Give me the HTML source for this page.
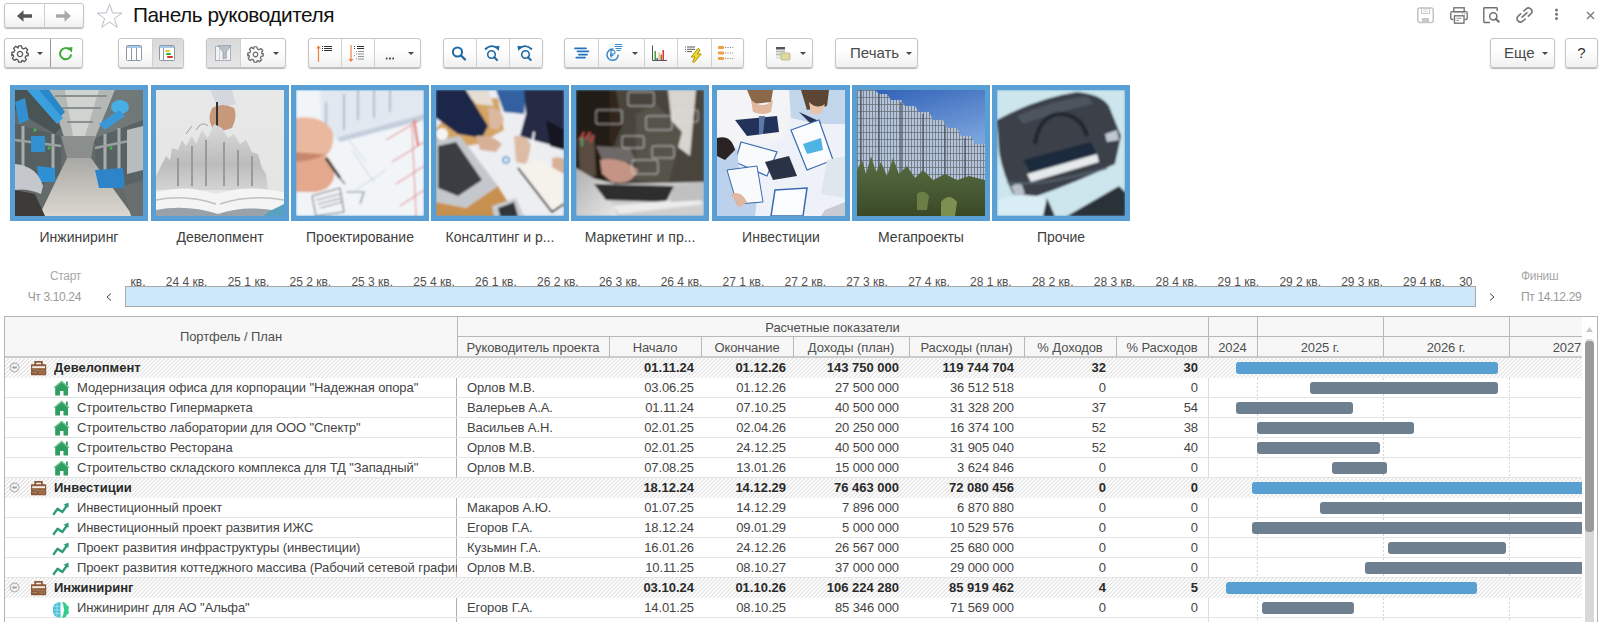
<!DOCTYPE html>
<html><head><meta charset="utf-8">
<style>
*{box-sizing:border-box;margin:0;padding:0}
html,body{width:1604px;height:622px;overflow:hidden;background:#fff;font-family:"Liberation Sans",sans-serif;color:#333;position:relative}
.a{position:absolute}
.btn{position:absolute;top:38px;height:30px;border:1px solid #c6c6c6;border-radius:3px;background:linear-gradient(#fff 40%,#f0f0f0);box-shadow:0 1px 1px #b4b4b4}
.dv{position:absolute;top:0;bottom:0;width:1px;background:#d0d0d0}
.pr{position:absolute;top:0;bottom:0;background:linear-gradient(#d9d9d9,#e6e6e6)}
.dd{position:absolute;width:0;height:0;border-left:3px solid transparent;border-right:3px solid transparent;border-top:3px solid #484848;margin-left:0.5px;margin-top:0.5px}
svg{position:absolute;overflow:visible}
.tile{position:absolute;top:85px;width:138px;height:136px;background:#5a9fd4;padding:5px}
.tile .im{position:relative;width:100%;height:100%;overflow:hidden}
.lbl{position:absolute;top:229px;width:140px;text-align:center;font-size:14px;color:#404040;white-space:nowrap}
.q{position:absolute;top:275px;font-size:12px;color:#505050;white-space:nowrap}
.hd{font-size:13px;color:#4f4f4f;text-align:center;white-space:nowrap;letter-spacing:-0.1px}
.rw{left:0;width:1577px;height:20px;border-bottom:1px solid #e4e4e4;font-size:13px;color:#444;white-space:nowrap;letter-spacing:-0.1px}
.rw.g{font-weight:bold;color:#2a2a2a;letter-spacing:0}
.nm{position:absolute;top:2px;overflow:hidden;width:380px}
.c{position:absolute;top:2px}
.bar{position:absolute;top:4px;height:12px;border-radius:3px}
</style></head><body>
<svg width="0" height="0" style="position:absolute"><defs><pattern id="hatch" width="4" height="4" patternUnits="userSpaceOnUse"><rect width="4" height="4" fill="#fdfdfd"/><path d="M3 0h1v1h-1z M2 1h1v1h-1z M1 2h1v1h-1z M0 3h1v1h-1z" fill="#e0e0e0"/><path d="M0 0h1v1h-1z M3 1h1v1h-1z M2 2h1v1h-1z M1 3h1v1h-1z" fill="#f3f3f3"/></pattern></defs></svg>

<!-- title bar -->
<div class="btn" style="left:4px;top:3px;width:80px;height:25px">
  <div class="dv" style="left:39px"></div>
  <svg style="left:12px;top:6px" width="15" height="12" viewBox="0 0 15 12"><path d="M0 6 L6.5 0.3 V4.2 H15 V7.8 H6.5 V11.7 Z" fill="#555"/></svg>
  <svg style="left:51px;top:6px" width="15" height="12" viewBox="0 0 15 12"><path d="M15 6 L8.5 0.3 V4.2 H0 V7.8 H8.5 V11.7 Z" fill="#a8a8a8"/></svg>
</div>
<svg style="left:96px;top:3px" width="27" height="25" viewBox="0 0 27 25"><path d="M13.5 1 L16.6 10 L26 10 L18.4 15.6 L21.3 24.5 L13.5 19 L5.7 24.5 L8.6 15.6 L1 10 L10.4 10 Z" fill="none" stroke="#b8bec6" stroke-width="1"/></svg>
<div class="a" style="left:133px;top:3px;font-size:20.8px;letter-spacing:-0.45px;color:#111;white-space:nowrap">Панель руководителя</div>

<!-- header icons -->
<svg style="left:1417px;top:7px" width="18" height="17" viewBox="0 0 18 17"><rect x="0.8" y="1" width="15.4" height="14.5" rx="2" fill="none" stroke="#c4c4c4" stroke-width="1.5"/><rect x="4.5" y="1" width="8" height="5.5" fill="none" stroke="#c8c8c8" stroke-width="1"/><path d="M6 2.8 H11 M6 4.6 H11" stroke="#d0d0d0" stroke-width="0.8"/><rect x="5" y="11" width="7" height="4" fill="#c8c8c8"/></svg>
<svg style="left:1450px;top:7px" width="19" height="17" viewBox="0 0 19 17"><rect x="3.8" y="0.8" width="10.4" height="4" fill="none" stroke="#777" stroke-width="1.4"/><path d="M3.5 12.5 H2.2 Q0.8 12.5 0.8 11 V6 Q0.8 4.6 2.2 4.6 H15.8 Q17.2 4.6 17.2 6 V11 Q17.2 12.5 15.8 12.5 H14.5" fill="none" stroke="#777" stroke-width="1.4"/><rect x="4.5" y="8.8" width="9.5" height="7.4" fill="#fff" stroke="#777" stroke-width="1.4"/><path d="M6.5 11.3 H11.5 M6.5 13.5 H9" stroke="#888" stroke-width="0.9"/><circle cx="12.5" cy="6.8" r="0.6" fill="#888"/><circle cx="14.8" cy="6.8" r="0.6" fill="#888"/></svg>
<svg style="left:1483px;top:7px" width="18" height="17" viewBox="0 0 18 17"><path d="M7 15.5 H1.5 Q0.8 15.5 0.8 14.8 V1.5 Q0.8 0.8 1.5 0.8 H13.5 Q14.2 0.8 14.2 1.5 V4" fill="none" stroke="#707070" stroke-width="1.4"/><circle cx="10.3" cy="9.3" r="3.6" fill="none" stroke="#707070" stroke-width="1.5"/><path d="M12.8 11.8 L15.8 14.8" stroke="#707070" stroke-width="2" stroke-linecap="round"/></svg>
<svg style="left:1515px;top:6px" width="19" height="18" viewBox="0 0 17 16"><g transform="rotate(-42 8.5 8)"><path d="M6.6 4.9 H4 Q0.7 4.9 0.7 8 Q0.7 11.1 4 11.1 H6.6" fill="none" stroke="#777" stroke-width="1.45" stroke-linecap="round"/><path d="M10.4 4.9 H13 Q16.3 4.9 16.3 8 Q16.3 11.1 13 11.1 H10.4" fill="none" stroke="#777" stroke-width="1.45" stroke-linecap="round"/><path d="M5.6 8 H11.4" stroke="#777" stroke-width="1.45" stroke-linecap="round"/></g></svg>
<svg style="left:1554px;top:8px" width="5" height="13" viewBox="0 0 5 13"><circle cx="2.5" cy="2" r="1.5" fill="#777"/><circle cx="2.5" cy="6.2" r="1.5" fill="#777"/><circle cx="2.5" cy="10.4" r="1.5" fill="#777"/></svg>
<svg style="left:1586px;top:11px" width="9" height="9" viewBox="0 0 9 9"><path d="M1 1 L8 8 M8 1 L1 8" stroke="#777" stroke-width="1.3"/></svg>

<!-- toolbar -->
<div class="btn" style="left:4px;width:79px">
  <div class="dv" style="left:45px;background:#9a9a9a"></div>
  <svg style="left:6px;top:6px" width="18" height="18" viewBox="-9 -9 18 18"><path d="M-1.5 -8.2 H1.5 L2 -5.9 L3.7 -5 L5.6 -6.3 L7.7 -4.2 L6.4 -2.3 L7 -0.6 L8.2 -0.9 V1.5 L6 2 L5.1 3.7 L6.4 5.6 L4.3 7.7 L2.4 6.4 L1.5 7 V8.2 H-1.5 L-2 6 L-3.7 5.1 L-5.6 6.4 L-7.7 4.3 L-6.4 2.4 L-7 0.6 L-8.2 1.5 V-1.5 L-6 -2 L-5.1 -3.7 L-6.4 -5.6 L-4.3 -7.7 L-2.4 -6.4 L-1.9 -5.9 Z" fill="none" stroke="#555" stroke-width="1.3" stroke-linejoin="round"/><circle r="2.6" fill="none" stroke="#555" stroke-width="1.3"/></svg>
  <div class="dd" style="left:31px;top:12.5px"></div>
  <svg style="left:53px;top:7px" width="16" height="16" viewBox="0 0 16 16"><path d="M13.2 8.5 A5.6 5.6 0 1 1 11.5 3.6" fill="none" stroke="#3aaa35" stroke-width="2"/><path d="M9.2 1.8 L14.5 1 L13.8 6.6 Z" fill="#3aaa35"/></svg>
</div>

<div class="btn" style="left:118px;width:66px">
  <div class="pr" style="left:33px;right:0;border-radius:0 2px 2px 0"></div>
  <div class="dv" style="left:33px"></div>
  <svg style="left:7px;top:6px" width="18" height="17" viewBox="0 0 18 17"><rect x="0.5" y="0.5" width="15" height="15" rx="1" fill="#fff" stroke="#8a98a8"/><rect x="1" y="1" width="14" height="2" fill="#a8c8e8"/><path d="M5.5 3 V15.5 M10.5 3 V15.5" stroke="#8a98a8"/></svg>
  <svg style="left:40px;top:6px" width="18" height="17" viewBox="0 0 18 17"><rect x="0.5" y="0.5" width="15" height="15" rx="1" fill="#fff" stroke="#8a98a8"/><rect x="1" y="1" width="14" height="2" fill="#a8c8e8"/><path d="M4.5 3 V15.5" stroke="#8a98a8"/><rect x="6" y="5" width="5" height="2" rx="1" fill="#e8c830"/><rect x="7" y="8" width="5" height="2" rx="1" fill="#30b030"/><rect x="8" y="11" width="6" height="2" rx="1" fill="#e03030"/></svg>
</div>

<div class="btn" style="left:206px;width:80px">
  <div class="pr" style="left:0;width:33px;border-radius:2px 0 0 2px"></div>
  <div class="dv" style="left:33px"></div>
  <svg style="left:8px;top:6px" width="18" height="17" viewBox="0 0 18 17"><rect x="0.5" y="1.5" width="15" height="14" fill="#f4f4f4" stroke="#a8b0b8"/><path d="M4.5 2 V15 M11.5 2 V15" stroke="#c8d0d8"/><path d="M3 0.5 H16 L11 7 V13 L8 14 V7 Z" fill="#b8c0c8" stroke="#98a0a8" stroke-width="0.8"/></svg>
  <svg style="left:40px;top:7px" width="17" height="17" viewBox="-9 -9 18 18"><path d="M-1.5 -8.2 H1.5 L2 -5.9 L3.7 -5 L5.6 -6.3 L7.7 -4.2 L6.4 -2.3 L7 -0.6 L8.2 -0.9 V1.5 L6 2 L5.1 3.7 L6.4 5.6 L4.3 7.7 L2.4 6.4 L1.5 7 V8.2 H-1.5 L-2 6 L-3.7 5.1 L-5.6 6.4 L-7.7 4.3 L-6.4 2.4 L-7 0.6 L-8.2 1.5 V-1.5 L-6 -2 L-5.1 -3.7 L-6.4 -5.6 L-4.3 -7.7 L-2.4 -6.4 L-1.9 -5.9 Z" fill="none" stroke="#666" stroke-width="1.3" stroke-linejoin="round"/><circle r="2.4" fill="none" stroke="#666" stroke-width="1.3"/></svg>
  <div class="dd" style="left:65px;top:12.5px"></div>
</div>

<div class="btn" style="left:308px;width:113px">
  <div class="dv" style="left:32px"></div><div class="dv" style="left:65px"></div>
  <svg style="left:4px;top:6px" width="26" height="18" viewBox="0 0 26 18"><path d="M5.5 17 V2" stroke="#f08040" stroke-width="1.2"/><path d="M3 3.5 L5.5 0.5 L8 3.5 Z" fill="#f08040"/><path d="M9 1.5 H10 M9 3.5 H10 M9 5.5 H10" stroke="#333" stroke-width="1.1"/><path d="M11 1.5 H19 M11 3.5 H19 M11 5.5 H19" stroke="#333" stroke-width="1.1"/></svg>
  <svg style="left:37px;top:6px" width="26" height="18" viewBox="0 0 26 18"><path d="M5 0 V15" stroke="#f08040" stroke-width="1.2"/><path d="M2.5 14 L5 17 L7.5 14 Z" fill="#f08040"/><path d="M8 1.5 H9 M8 3.5 H9 M11 1.5 H18 M11 3.5 H18" stroke="#333" stroke-width="1.1"/><path d="M10 6.5 H11 M12 6.5 H18 M10 9 H11 M12 9 H18 M8 10.5 H9 M12 11.5 H18 M10 14 H11 M12 14 H18" stroke="#666" stroke-width="0.7"/></svg>
  <div class="a" style="left:76px;top:18px;width:9px;height:3px;background:radial-gradient(circle,#333 0.9px,transparent 1.2px) 0 0/3.3px 3px"></div>
  <div class="dd" style="left:98px;top:12.5px"></div>
</div>

<div class="btn" style="left:443px;width:100px">
  <div class="dv" style="left:32px"></div><div class="dv" style="left:65px"></div>
  <svg style="left:7px;top:6px" width="18" height="18" viewBox="0 0 18 18"><circle cx="6.5" cy="7" r="4.6" fill="none" stroke="#1f6aa5" stroke-width="2"/><path d="M10 10.5 L14 14.5" stroke="#1f6aa5" stroke-width="2.4" stroke-linecap="round"/></svg>
  <svg style="left:38px;top:5px" width="20" height="20" viewBox="0 0 20 20"><circle cx="9.5" cy="10.5" r="3.8" fill="none" stroke="#1f6aa5" stroke-width="1.6"/><path d="M12.3 13.3 L15 16" stroke="#1f6aa5" stroke-width="2" stroke-linecap="round"/><path d="M3 5.5 Q9 -0.5 15 4" fill="none" stroke="#1f6aa5" stroke-width="1.8"/><path d="M12.5 2.5 L17.5 1.8 L16.8 7 Z" fill="#1f6aa5"/></svg>
  <svg style="left:71px;top:5px" width="20" height="20" viewBox="0 0 20 20"><g transform="translate(20,0) scale(-1,1)"><circle cx="9.5" cy="10.5" r="3.8" fill="none" stroke="#1f6aa5" stroke-width="1.6"/><path d="M3 5.5 Q9 -0.5 15 4" fill="none" stroke="#1f6aa5" stroke-width="1.8"/><path d="M12.5 2.5 L17.5 1.8 L16.8 7 Z" fill="#1f6aa5"/></g><path d="M13 13.3 L15.7 16" stroke="#1f6aa5" stroke-width="2" stroke-linecap="round"/></svg>
</div>

<div class="btn" style="left:564px;width:180px">
  <div class="dv" style="left:33px"></div><div class="dv" style="left:79px"></div><div class="dv" style="left:112px"></div><div class="dv" style="left:146px"></div>
  <svg style="left:8px;top:7px" width="18" height="14" viewBox="0 0 18 14"><path d="M2 2.3 H13 M4.5 5.3 H15.5 M6 8.6 H14 M3.3 11.6 H12" stroke="#2272c0" stroke-width="1.8" stroke-linecap="round"/></svg>
  <svg style="left:39px;top:5px" width="20" height="18" viewBox="0 0 20 18"><path d="M9.5 5.2 A5.6 5.6 0 1 0 14.2 10.5" fill="none" stroke="#3a88cc" stroke-width="1.5"/><path d="M7 13.5 V6.5 H9.2 A1.8 1.8 0 0 1 9.2 10.1 H6 M6 11.6 H9.2" fill="none" stroke="#3a88cc" stroke-width="1.2"/><path d="M11 0.5 H18 M10.5 2.5 H18.5 M11.5 4.5 H17.5 M12.5 6.5 H16.5" stroke="#3a88d4" stroke-width="1"/></svg>
  <div class="dd" style="left:66px;top:12.5px"></div>
  <svg style="left:86px;top:6px" width="18" height="18" viewBox="0 0 18 18"><path d="M1.5 0.5 V15.5 H16" fill="none" stroke="#555" stroke-width="1"/><rect x="3.5" y="6" width="1.5" height="9" fill="#40a040"/><rect x="5.5" y="13" width="1.5" height="2" fill="#3060c0"/><rect x="7.5" y="7.5" width="1.5" height="7.5" fill="#e8d060"/><rect x="9.5" y="9.5" width="1.5" height="5.5" fill="#9a6a40"/><rect x="11.5" y="5" width="1.5" height="10" fill="#e03030"/></svg>
  <svg style="left:119px;top:6px" width="20" height="20" viewBox="0 0 20 20"><path d="M1 2 H2 M1 4.3 H2 M1 6.6 H2" stroke="#555" stroke-width="0.9"/><path d="M3 2 H11 M3 4.3 H11 M3 6.6 H8" stroke="#444" stroke-width="0.9"/><path d="M14 3.5 Q15.5 4 16 5 L13.5 9 H17.2 L10 17.5 Q9 17.5 8.6 16.8 L11 12 H7.2 Z" fill="#f2d630" stroke="#a89400" stroke-width="1" stroke-linejoin="round"/></svg>
  <svg style="left:152px;top:6px" width="20" height="16" viewBox="0 0 20 16"><rect x="1" y="1" width="6" height="3" rx="0.8" fill="#f0a040"/><rect x="1" y="6.5" width="6" height="3" rx="0.8" fill="#f0a040"/><rect x="1" y="12" width="6" height="3" rx="0.8" fill="#f0a040"/><path d="M8 2.5 H17 M8 8 H17 M8 13.5 H17" stroke="#888" stroke-width="0.9" stroke-dasharray="1.2 1.2"/></svg>
</div>

<div class="btn" style="left:766px;width:47px">
  <svg style="left:8px;top:7px" width="18" height="16" viewBox="0 0 18 16"><rect x="1" y="1" width="9" height="2.5" fill="#555"/><rect x="1" y="4.5" width="9" height="2" fill="#bbb"/><rect x="1" y="7.5" width="9" height="2" fill="#bbb"/><rect x="1" y="10.5" width="9" height="2" fill="#ddd"/><rect x="6" y="7" width="9" height="7" rx="1" fill="#dcd8a0" stroke="#b8b480" stroke-width="0.8"/></svg>
  <div class="dd" style="left:32px;top:12.5px"></div>
</div>

<div class="btn" style="left:835px;width:83px">
  <div class="a" style="left:14px;top:4.5px;font-size:15px;color:#4a4a4a">Печать</div>
  <div class="dd" style="left:69px;top:12.5px"></div>
</div>

<div class="btn" style="left:1490px;width:65px">
  <div class="a" style="left:13px;top:4.5px;font-size:15px;color:#4a4a4a">Еще</div>
  <div class="dd" style="left:50px;top:12.5px"></div>
</div>
<div class="btn" style="left:1565px;width:33px">
  <div class="a" style="left:0;width:31px;text-align:center;top:4.5px;font-size:15px;color:#333">?</div>
</div>



<!-- tiles -->
<div class="tile" style="left:10px"><div class="im"><svg width="128" height="126" viewBox="0 0 128 126" style="position:absolute;left:0;top:0">
<defs><filter id="b0" x="-5%" y="-5%" width="110%" height="110%"><feGaussianBlur stdDeviation="0.7"/></filter>
<linearGradient id="g0f" x1="0" y1="0" x2="0" y2="1"><stop offset="0" stop-color="#a8a8a4"/><stop offset="1" stop-color="#dcd8d0"/></linearGradient></defs>
<g filter="url(#b0)">
<rect width="128" height="126" fill="#646a6a"/>
<path d="M34 0 H100 L80 50 H50 Z" fill="#b4b8b4"/>
<path d="M50 0 H84 L70 46 H58 Z" fill="#d0d4d0"/>
<path d="M40 6 L92 6 M46 18 L86 18 M52 32 L78 32" stroke="#8a9090" stroke-width="2"/>
<path d="M0 0 H14 L46 38 L40 44 L0 20 Z" fill="#4a5454"/>
<path d="M12 0 H26 L48 28 L42 34 Z" fill="#3aa0e0"/>
<path d="M24 0 H34 L50 22 L46 26 Z" fill="#2a88c8"/>
<path d="M0 12 L10 8 L14 30 L4 34 Z" fill="#3090d0"/>
<path d="M0 34 L46 46 L46 84 L24 96 L0 90 Z" fill="#566060"/><path d="M8 36 V92 M38 44 V86" stroke="#a8acac" stroke-width="3"/><path d="M0 50 L46 56" stroke="#9aa0a0" stroke-width="2.5"/>
<path d="M128 0 H100 L80 48 L128 36 Z" fill="#707878"/>
<ellipse cx="105" cy="17" rx="9" ry="7" fill="#48aee4"/>
<path d="M84 34 L104 20 L110 26 L90 40 Z" fill="#3a98d8"/>
<path d="M80 48 L128 30 V90 L108 96 L80 86 Z" fill="#5a6464"/><path d="M90 44 V90 M104 38 V94" stroke="#a8acac" stroke-width="3"/><path d="M80 58 L128 48" stroke="#9aa0a0" stroke-width="2.5"/>
<path d="M112 40 L128 36 V80 L112 84 Z" fill="#b8bcbc"/>
<path d="M46 46 H80 L76 68 H52 Z" fill="#8a8e8c"/>
<path d="M52 68 H76 L118 126 H24 Z" fill="url(#g0f)"/>
<path d="M16 46 H30 V62 H16 Z" fill="#3090d0"/>
<path d="M22 76 L40 78 L40 92 L24 92 Z" fill="#2e90d4"/>
<path d="M0 74 Q22 76 28 96 L26 104 Q12 98 0 100 Z" fill="#c4c8cc"/>
<path d="M0 100 L20 104 L30 126 H0 Z" fill="#3c3a38"/>
<path d="M80 80 L108 78 L110 98 L84 98 Z" fill="#2e84c8"/>
<path d="M108 96 L128 92 V126 H116 Z" fill="#6a6e6e"/>
<circle cx="20" cy="40" r="1.5" fill="#40c040"/><circle cx="34" cy="58" r="1.5" fill="#40c040"/><circle cx="96" cy="58" r="1.5" fill="#40c040"/>
</g>
</svg></div></div>
<div class="lbl" style="left:9px">Инжиниринг</div>
<div class="tile" style="left:151px"><div class="im"><svg width="128" height="126" viewBox="0 0 128 126" style="position:absolute;left:0;top:0">
<defs><filter id="b1" x="-5%" y="-5%" width="110%" height="110%"><feGaussianBlur stdDeviation="0.7"/></filter>
<linearGradient id="g1b" x1="0" y1="0" x2="0" y2="1"><stop offset="0" stop-color="#e8e8e8"/><stop offset="1" stop-color="#e4e4e4"/></linearGradient>
<linearGradient id="g1c" x1="0" y1="0" x2="0" y2="1"><stop offset="0" stop-color="#dadada"/><stop offset="0.6" stop-color="#bcbcbc"/><stop offset="1" stop-color="#d4d4d4"/></linearGradient></defs>
<g filter="url(#b1)">
<rect width="128" height="126" fill="url(#g1b)"/>
<path d="M54 0 H76 L80 14 L62 18 Z" fill="#d4d8de"/>
<path d="M56 18 Q66 12 78 18 Q82 26 76 38 Q66 42 58 40 Q52 32 54 24 Z" fill="#c8987a"/>
<path d="M60 12 L62 12 L62 72 L60 72 Z" fill="#303030"/>
<path d="M4 78 L10 66 L14 70 L16 58 L22 60 L26 50 L30 56 L36 46 L40 54 L46 40 L52 48 L58 34 L66 38 L72 48 L78 44 L84 54 L90 50 L96 62 L102 64 L106 78 L110 84 L112 100 H0 L0 86 Z" fill="url(#g1c)"/>
<path d="M36 56 V96 M50 50 V96 M68 52 V96 M82 60 V96 M22 68 V96 M96 66 V96" stroke="#9a9a9a" stroke-width="2"/>
<path d="M40 40 Q46 30 52 36 M30 44 L36 36" fill="none" stroke="#a0a0a0" stroke-width="1"/>
<path d="M0 102 Q30 94 60 104 Q90 94 128 102 V122 Q90 114 62 124 Q30 114 0 120 Z" fill="#f4f4f4"/>
<path d="M0 120 Q30 114 62 124 Q90 114 128 122 V126 H0 Z" fill="#98a2a8"/>
<path d="M0 110 Q30 104 60 114 M64 114 Q94 104 128 110" fill="none" stroke="#c0c0c0" stroke-width="1.5"/>
<path d="M112 122 L128 114 V126 H108 Z" fill="#5aa0c0"/>
</g>
</svg></div></div>
<div class="lbl" style="left:150px">Девелопмент</div>
<div class="tile" style="left:291px"><div class="im"><svg width="128" height="126" viewBox="0 0 128 126" style="position:absolute;left:0;top:0">
<defs><filter id="b2" x="-5%" y="-5%" width="110%" height="110%"><feGaussianBlur stdDeviation="0.8"/></filter></defs>
<g filter="url(#b2)">
<rect width="128" height="126" fill="#f2f5f8"/>
<path d="M24 0 H128 V24 L40 48 L26 42 Z" fill="#e2e8f0"/>
<path d="M30 12 V40 M48 4 V40 M62 0 V30 M78 0 V28 M94 0 V22" stroke="#9aabc0" stroke-width="1.4"/>
<path d="M40 48 L128 24 V30 L44 52 Z" fill="#c4cedc"/>
<path d="M0 28 Q24 24 36 40 Q40 56 30 66 L0 68 Z" fill="#eab89e"/>
<path d="M0 68 L30 66 Q40 74 38 88 Q34 100 20 102 L0 102 Z" fill="#e4a88c"/>
<path d="M0 62 Q18 64 30 64 Q20 70 0 72 Z" fill="#c8866c"/>
<path d="M30 68 L44 88" stroke="#2a2a2a" stroke-width="3"/>
<path d="M43 87 L49 94" stroke="#687078" stroke-width="1.5"/>
<path d="M90 50 L124 30 M96 72 L128 52 M100 94 L128 76 M104 116 L128 100 M116 36 L120 126" stroke="#e49494" stroke-width="1.2"/>
<path d="M118 30 L122 56" stroke="#e08080" stroke-width="2.5"/>
<path d="M16 106 L44 98 L48 122 L20 126 Z" fill="none" stroke="#505860" stroke-width="1"/>
<path d="M20 110 L44 104 M22 114 L46 108 M24 118 L46 112" stroke="#606870" stroke-width="0.8"/>
<path d="M50 102 H68 L64 114" fill="none" stroke="#708090" stroke-width="1.2"/>
<path d="M56 60 L78 92 M48 44 L70 72 M60 100 L90 80" stroke="#c4d0dc" stroke-width="1"/>
</g>
</svg></div></div>
<div class="lbl" style="left:290px">Проектирование</div>
<div class="tile" style="left:431px"><div class="im"><svg width="128" height="126" viewBox="0 0 128 126" style="position:absolute;left:0;top:0">
<defs><filter id="b3" x="-5%" y="-5%" width="110%" height="110%"><feGaussianBlur stdDeviation="0.8"/></filter></defs>
<g filter="url(#b3)">
<rect width="128" height="126" fill="#eceef2"/>
<path d="M0 38 L28 10 L62 8 L68 40 L42 54 L0 62 Z" fill="#d4a464"/>
<path d="M0 0 H30 L52 36 L46 48 L22 44 L0 28 Z" fill="#1c2848"/>
<path d="M30 0 H52 L58 16 L40 14 Z" fill="#e6ddd4"/>
<path d="M60 0 H90 L88 24 L68 22 Z" fill="#3060a0"/>
<path d="M88 0 H128 V58 L104 52 L84 46 L90 24 Z" fill="#262a44"/>
<path d="M110 30 L128 40 V60 L114 56 Z" fill="#121620"/>
<path d="M52 18 Q64 16 68 30 L62 40 L54 38 Z" fill="#dcb8a0"/>
<path d="M40 46 Q56 44 66 54 L60 62 L44 60 Z" fill="#d8b098"/>
<path d="M78 46 Q92 44 96 58 L90 74 L80 72 Z" fill="#dcbca4"/>
<path d="M116 68 Q126 66 128 70 V88 L116 84 Z" fill="#d8b098"/>
<path d="M0 50 L24 46 L62 96 L30 118 L0 112 Z" fill="#c4c8cc"/>
<path d="M2 56 L20 52 L46 90 L22 106 L2 98 Z" fill="#3a3e42"/>
<path d="M0 112 L30 118 L62 96 L72 112 L58 126 H0 Z" fill="#c89050"/>
<path d="M56 116 L80 108 L88 126 H58 Z" fill="#c8ccd0"/>
<path d="M62 118 L78 112 L82 126 H64 Z" fill="#303438"/>
<path d="M82 78 L100 68 L128 84 V116 L116 122 Z" fill="#f4f2ea"/>
<path d="M82 78 L116 122 L128 114" fill="none" stroke="#2a2a2a" stroke-width="2"/>
<circle cx="6" cy="44" r="6" fill="#f6f6f6"/>
<circle cx="70" cy="70" r="3" fill="none" stroke="#3a90d8" stroke-width="1.5"/>
<path d="M98 42 L94 68" stroke="#f4f4f4" stroke-width="2"/>
</g>
</svg></div></div>
<div class="lbl" style="left:430px">Консалтинг и р...</div>
<div class="tile" style="left:571px"><div class="im"><svg width="128" height="126" viewBox="0 0 128 126" style="position:absolute;left:0;top:0">
<defs><filter id="b4" x="-5%" y="-5%" width="110%" height="110%"><feGaussianBlur stdDeviation="0.8"/></filter>
<linearGradient id="g4l" x1="0" y1="0" x2="1" y2="1"><stop offset="0" stop-color="#b0b0b0"/><stop offset="1" stop-color="#e8e8e8"/></linearGradient></defs>
<g filter="url(#b4)">
<rect width="128" height="126" fill="#30261e"/>
<rect x="0" y="0" width="34" height="126" fill="#241c16"/>
<path d="M40 0 H128 V100 H30 Q34 60 46 36 Z" fill="#48443e"/>
<path d="M92 0 H120 L114 66 L98 54 Z" fill="#d8d4d0"/>
<path d="M60 24 L80 14 L106 42 L92 96 L60 90 Z" fill="#56524c"/>
<path d="M2 48 L18 44 L20 86 L4 88 Z" fill="#5a4c40"/>
<path d="M4 50 L8 42 M10 50 L14 42 M14 52 L18 46" stroke="#c04848" stroke-width="2"/>
<path d="M6 56 L6 48" stroke="#40a060" stroke-width="2"/>
<path d="M20 56 L54 58 L60 72 L28 74 Z" fill="#6e6866"/>
<path d="M24 70 Q44 66 62 80 Q56 96 36 92 L26 84 Z" fill="#c49484"/>
<path d="M0 84 L40 94 L128 92 V126 H0 Z" fill="#cfcfcf"/>
<path d="M0 78 L24 92 L42 126 H0 Z" fill="url(#g4l)"/>
<path d="M18 94 L98 96 L90 112 L30 110 Z" fill="#2e2e2e"/>
<path d="M36 116 L120 108 L128 114 L44 124 Z" fill="#ececec"/>
<path d="M98 96 L128 92 V110 L94 112 Z" fill="#c0c0c0"/>
<g fill="none" stroke="#e0e0e0" stroke-width="0.8">
<rect x="52" y="2" width="26" height="14" rx="2"/><rect x="20" y="20" width="26" height="14" rx="2"/>
<rect x="70" y="26" width="26" height="14" rx="2"/><rect x="98" y="20" width="24" height="12" rx="2"/>
<rect x="46" y="46" width="22" height="12" rx="2"/><rect x="76" y="56" width="22" height="12" rx="2"/>
<rect x="56" y="70" width="26" height="14" rx="2"/>
</g>
</g>
</svg></div></div>
<div class="lbl" style="left:570px">Маркетинг и пр...</div>
<div class="tile" style="left:712px"><div class="im"><svg width="128" height="126" viewBox="0 0 128 126" style="position:absolute;left:0;top:0">
<defs><filter id="b5" x="-5%" y="-5%" width="110%" height="110%"><feGaussianBlur stdDeviation="0.7"/></filter></defs>
<g filter="url(#b5)">
<rect width="128" height="126" fill="#eef2f8"/>
<path d="M0 0 H74 L70 44 L50 54 L10 56 L0 40 Z" fill="#f4f4f6"/>
<path d="M30 0 H56 L54 12 L36 14 Z" fill="#8a6848"/>
<path d="M34 10 Q46 20 56 10 L54 22 Q46 26 36 22 Z" fill="#e0b8a0"/>
<path d="M18 30 L60 26 L62 42 L30 46 Z" fill="#24305a"/>
<path d="M42 26 L48 26 L46 44 L42 44 Z" fill="#5a7aa8"/>
<path d="M72 0 H128 V34 L100 34 L74 28 Z" fill="#c4d6ec"/>
<path d="M84 0 H112 L110 16 L90 20 Z" fill="#5c4430"/>
<path d="M92 12 Q100 20 108 14 L104 24 L94 24 Z" fill="#e8c4ac"/>
<path d="M82 22 L104 32 L96 36 Z" fill="#2a3458"/>
<path d="M74 40 L102 30 L116 70 L90 80 Z" fill="#fafcff" stroke="#3a6ab0" stroke-width="1.2"/>
<path d="M86 54 L104 48 L106 60 L90 64 Z" fill="#50b4e4"/>
<path d="M24 52 L60 62 L50 86 L18 72 Z" fill="#f8fafc" stroke="#3a6ab0" stroke-width="1.2"/>
<path d="M48 72 L72 66 L80 86 L56 90 Z" fill="#2a3244"/>
<path d="M0 50 Q12 48 20 60 L24 94 L40 110 L38 126 H0 Z" fill="#bcd2ec"/>
<path d="M0 48 Q14 44 18 60 L8 70 L0 66 Z" fill="#2a2420"/>
<path d="M10 80 L40 76 L46 112 L20 114 Z" fill="#f8fafc" stroke="#3a6ab0" stroke-width="1"/>
<path d="M14 104 Q24 100 30 112 L22 118 Z" fill="#e0b8a0"/>
<path d="M58 100 L90 98 L86 126 H54 Z" fill="#fafcff" stroke="#3a6ab0" stroke-width="1.5"/>
<path d="M110 70 L128 66 V108 L104 104 Z" fill="#e0e6ee"/>
<path d="M108 120 L128 112 V126 H104 Z" fill="#c8ccd2"/>
</g>
</svg></div></div>
<div class="lbl" style="left:711px">Инвестиции</div>
<div class="tile" style="left:852px"><div class="im"><svg width="128" height="126" viewBox="0 0 128 126" style="position:absolute;left:0;top:0">
<defs><filter id="b6" x="-5%" y="-5%" width="110%" height="110%"><feGaussianBlur stdDeviation="0.5"/></filter>
<linearGradient id="g6s" x1="0.2" y1="0" x2="0.5" y2="1"><stop offset="0" stop-color="#3464b8"/><stop offset="0.55" stop-color="#78a2dc"/><stop offset="1" stop-color="#b4ccec"/></linearGradient>
<pattern id="p6" width="6" height="7" patternUnits="userSpaceOnUse"><rect width="6" height="7" fill="#b4c4da"/><path d="M0 0.5 H6 M0.5 0 V7 M3.5 0 V7" stroke="#6a727c" stroke-width="0.8"/></pattern>
<linearGradient id="g6t" x1="0" y1="0" x2="0" y2="1"><stop offset="0" stop-color="#5a6e42"/><stop offset="1" stop-color="#3a4a28"/></linearGradient></defs>
<g filter="url(#b6)">
<rect width="128" height="126" fill="url(#g6s)"/>
<path d="M0 0 H18 L22 4 H30 L34 10 H44 L48 16 H58 L62 22 H72 L76 30 H86 L90 38 H100 L104 46 H114 L118 54 H128 V100 H0 Z" fill="url(#p6)"/>
<path d="M4 0 V100 M22 4 V100 M44 12 V100 M66 24 V100 M88 36 V100 M108 48 V100" fill="none" stroke="#4a525a" stroke-width="1.2"/>
<path d="M0 80 L5 70 L9 84 L14 66 L19 82 L24 72 L30 86 L36 68 L42 84 L50 76 L58 88 L66 80 L76 90 L88 84 L100 90 L112 86 L128 90 V126 H0 Z" fill="url(#g6t)"/>
<path d="M84 112 Q92 102 100 112 L98 126 H84 Z" fill="#7e9050"/>
<path d="M60 104 Q66 98 72 106 L70 120 H60 Z" fill="#6a7e44"/>
</g>
</svg></div></div>
<div class="lbl" style="left:851px">Мегапроекты</div>
<div class="tile" style="left:992px"><div class="im"><svg width="128" height="126" viewBox="0 0 128 126" style="position:absolute;left:0;top:0">
<defs><filter id="b7" x="-5%" y="-5%" width="110%" height="110%"><feGaussianBlur stdDeviation="0.8"/></filter></defs>
<g filter="url(#b7)">
<rect width="128" height="126" fill="#cde6ee"/>
<path d="M0 110 L40 100 L60 126 H0 Z" fill="#d8eef4"/>
<path d="M0 30 Q40 8 80 2 Q104 4 112 16 L124 46 L118 74 Q80 92 40 106 L16 104 Q6 84 2 62 Z" fill="#3a4048"/>
<path d="M20 26 Q50 12 90 6 L96 14 Q60 22 26 34 Z" fill="#4e545e"/>
<path d="M38 54 Q42 26 62 24 Q84 24 90 46" fill="none" stroke="#22282e" stroke-width="4"/>
<path d="M26 70 L94 52 L100 64 L34 84 Z" fill="#1e2c3c"/>
<path d="M30 84 L100 64 L102 72 L34 92 Z" fill="#e6eaec"/>
<path d="M14 96 L24 92 L28 104 L18 106 Z" fill="#b8c0c8"/>
<path d="M108 44 L120 40 L122 50 L110 52 Z" fill="#c0c8d0"/>
<path d="M70 126 L122 96 L128 102 V126 Z" fill="#2c3238"/>
<path d="M10 92 Q40 98 110 78" fill="none" stroke="#56606c" stroke-width="2"/>
<path d="M50 108 L58 126 H46 Z" fill="#2c3238"/>
</g>
</svg></div></div>
<div class="lbl" style="left:991px">Прочие</div>

<!-- timeline -->
<div class="a" style="left:0;width:81px;top:269px;text-align:right;font-size:12px;letter-spacing:-0.3px;color:#a8a8a8">Старт</div>
<div class="a" style="left:0;width:81px;top:290px;text-align:right;font-size:12px;letter-spacing:-0.35px;color:#999">Чт 3.10.24</div>
<svg style="left:106px;top:293px" width="6" height="8" viewBox="0 0 6 8"><path d="M5 0.5 L1 4 L5 7.5" fill="none" stroke="#444" stroke-width="1"/></svg>
<svg style="left:1489px;top:293px" width="6" height="8" viewBox="0 0 6 8"><path d="M1 0.5 L5 4 L1 7.5" fill="none" stroke="#444" stroke-width="1"/></svg>
<div class="a" style="left:1521px;top:269px;font-size:12px;letter-spacing:-0.3px;color:#a8a8a8">Финиш</div>
<div class="a" style="left:1521px;top:290px;font-size:12px;letter-spacing:-0.35px;color:#999">Пт 14.12.29</div>
<div class="a" style="left:127px;top:265px;width:1345px;height:21px;overflow:hidden">
<div class="q" style="left:-23.1px;top:10px">24 3 кв.</div>
<div class="q" style="left:38.8px;top:10px">24 4 кв.</div>
<div class="q" style="left:100.7px;top:10px">25 1 кв.</div>
<div class="q" style="left:162.5px;top:10px">25 2 кв.</div>
<div class="q" style="left:224.4px;top:10px">25 3 кв.</div>
<div class="q" style="left:286.3px;top:10px">25 4 кв.</div>
<div class="q" style="left:348.1px;top:10px">26 1 кв.</div>
<div class="q" style="left:410.0px;top:10px">26 2 кв.</div>
<div class="q" style="left:471.9px;top:10px">26 3 кв.</div>
<div class="q" style="left:533.7px;top:10px">26 4 кв.</div>
<div class="q" style="left:595.6px;top:10px">27 1 кв.</div>
<div class="q" style="left:657.5px;top:10px">27 2 кв.</div>
<div class="q" style="left:719.3px;top:10px">27 3 кв.</div>
<div class="q" style="left:781.2px;top:10px">27 4 кв.</div>
<div class="q" style="left:843.0px;top:10px">28 1 кв.</div>
<div class="q" style="left:904.9px;top:10px">28 2 кв.</div>
<div class="q" style="left:966.8px;top:10px">28 3 кв.</div>
<div class="q" style="left:1028.6px;top:10px">28 4 кв.</div>
<div class="q" style="left:1090.5px;top:10px">29 1 кв.</div>
<div class="q" style="left:1152.4px;top:10px">29 2 кв.</div>
<div class="q" style="left:1214.2px;top:10px">29 3 кв.</div>
<div class="q" style="left:1276.1px;top:10px">29 4 кв.</div>
<div class="q" style="left:1332.2px;top:10px">30</div>
</div>
<div class="a" style="left:125px;top:286px;width:1351px;height:21px;background:#cde8fb;border:1px solid #a8a8a8"></div>

<!-- table -->
<div class="a" id="tbl" style="left:4px;top:316px;width:1594px;height:320px;border:1px solid #b4b4b4;border-bottom:none;overflow:hidden">
<div class="a" style="left:0;top:0;width:1577px;height:40px;background:#f7f7f7"></div>
<div class="a" style="left:452px;top:19px;width:1125px;height:1px;background:#b8b8b8"></div>
<div class="a" style="left:0;top:39px;width:1577px;height:2px;background:#cbcbcb"></div>
<div class="a" style="left:452px;top:0;width:1px;height:40px;background:#b8b8b8"></div>
<div class="a" style="left:1203px;top:0;width:1px;height:40px;background:#b8b8b8"></div>
<div class="a" style="left:1252px;top:0;width:1px;height:40px;background:#b8b8b8"></div>
<div class="a" style="left:1378px;top:0;width:1px;height:40px;background:#b8b8b8"></div>
<div class="a" style="left:1504px;top:0;width:1px;height:40px;background:#b8b8b8"></div>
<div class="a" style="left:604px;top:20px;width:1px;height:20px;background:#b8b8b8"></div>
<div class="a" style="left:696px;top:20px;width:1px;height:20px;background:#b8b8b8"></div>
<div class="a" style="left:788px;top:20px;width:1px;height:20px;background:#b8b8b8"></div>
<div class="a" style="left:904px;top:20px;width:1px;height:20px;background:#b8b8b8"></div>
<div class="a" style="left:1019px;top:20px;width:1px;height:20px;background:#b8b8b8"></div>
<div class="a" style="left:1111px;top:20px;width:1px;height:20px;background:#b8b8b8"></div>
<div class="a hd" style="left:0px;width:452px;top:12px">Портфель / План</div>
<div class="a hd" style="left:452px;width:751px;top:3px">Расчетные показатели</div>
<div class="a hd" style="left:452px;width:152px;top:23px">Руководитель проекта</div>
<div class="a hd" style="left:604px;width:92px;top:23px">Начало</div>
<div class="a hd" style="left:696px;width:92px;top:23px">Окончание</div>
<div class="a hd" style="left:788px;width:116px;top:23px">Доходы (план)</div>
<div class="a hd" style="left:904px;width:115px;top:23px">Расходы (план)</div>
<div class="a hd" style="left:1019px;width:92px;top:23px">% Доходов</div>
<div class="a hd" style="left:1111px;width:92px;top:23px">% Расходов</div>
<div class="a hd" style="left:1203px;width:49px;top:23px">2024</div>
<div class="a hd" style="left:1252px;width:126px;top:23px">2025 г.</div>
<div class="a hd" style="left:1378px;width:126px;top:23px">2026 г.</div>
<div class="a hd" style="left:1504px;width:126px;top:23px">2027 г.</div>
<div class="a" style="left:0;top:41px;width:1577px;height:280px;overflow:hidden">
<div class="a" style="left:451px;top:0;width:1px;height:300px;background:#b0b0b0"></div><div class="a" style="left:1203px;top:0;width:1px;height:300px;background:#dcdcdc"></div><div class="a" style="left:1252px;top:0;width:1px;height:300px;background:repeating-linear-gradient(#d4d4d4 0,#d4d4d4 2px,transparent 2px,transparent 4px)"></div><div class="a" style="left:1378px;top:0;width:1px;height:300px;background:repeating-linear-gradient(#d4d4d4 0,#d4d4d4 2px,transparent 2px,transparent 4px)"></div><div class="a" style="left:1504px;top:0;width:1px;height:300px;background:repeating-linear-gradient(#d4d4d4 0,#d4d4d4 2px,transparent 2px,transparent 4px)"></div>
<div class="a rw g" style="top:0px"><svg style="left:0;top:0" width="1577" height="20"><rect width="1577" height="20" fill="url(#hatch)"/></svg><svg style="left:4px;top:4px" width="11" height="11" viewBox="0 0 11 11"><circle cx="5.6" cy="5.5" r="4.4" fill="none" stroke="#b4b4b4" stroke-width="1.2"/><path d="M3.4 5.5 H7.8" stroke="#999" stroke-width="1.8"/></svg><svg style="left:26px;top:3px" width="16" height="15" viewBox="0 0 16 15"><path d="M3.3 0 H11.8 V4.5 H10 V1.8 H5.1 V4.5 H3.3 Z" fill="#8c5a38"/><rect x="0" y="3.2" width="15.2" height="11" rx="0.6" fill="#8c5a38"/><rect x="1.2" y="5.2" width="12.8" height="2" fill="#f4ece4"/><path d="M1.5 9 H5 L7 9.8 H14 M1.5 11.5 H6 M8 12 H14" stroke="#b89070" stroke-width="0.8"/></svg><span class="nm" style="left:49px;font-weight:bold">Девелопмент</span><span class="c" style="left:462px"></span><span class="c r" style="right:888px">01.11.24</span><span class="c r" style="right:796px">01.12.26</span><span class="c r" style="right:683px">143 750 000</span><span class="c r" style="right:568px">119 744 704</span><span class="c r" style="right:476px">32</span><span class="c r" style="right:384px">30</span><div class="bar" style="left:1230.9px;width:262.4px;background:#58a0d2"></div></div>
<div class="a rw" style="top:20px"><svg style="left:48px;top:2px" width="17" height="16" viewBox="0 0 17 16"><path d="M8.6 0.6 L16.6 7.2 L15.6 8.2 L8.6 2.4 L1.6 8.2 L0.6 7.2 Z" fill="#7cc49a"/><path d="M8.6 2.2 L15 7.6 V15.5 H10.5 V11 H7 V15.5 H2.2 V7.6 Z" fill="#2f9e62"/><rect x="13" y="1.5" width="1.8" height="4" fill="#2f9e62"/></svg><span class="nm" style="left:72px">Модернизация офиса для корпорации "Надежная опора"</span><span class="c" style="left:462px">Орлов М.В.</span><span class="c r" style="right:888px">03.06.25</span><span class="c r" style="right:796px">01.12.26</span><span class="c r" style="right:683px">27 500 000</span><span class="c r" style="right:568px">36 512 518</span><span class="c r" style="right:476px">0</span><span class="c r" style="right:384px">0</span><div class="bar" style="left:1304.8px;width:188.5px;background:#6e7f90"></div></div>
<div class="a rw" style="top:40px"><svg style="left:48px;top:2px" width="17" height="16" viewBox="0 0 17 16"><path d="M8.6 0.6 L16.6 7.2 L15.6 8.2 L8.6 2.4 L1.6 8.2 L0.6 7.2 Z" fill="#7cc49a"/><path d="M8.6 2.2 L15 7.6 V15.5 H10.5 V11 H7 V15.5 H2.2 V7.6 Z" fill="#2f9e62"/><rect x="13" y="1.5" width="1.8" height="4" fill="#2f9e62"/></svg><span class="nm" style="left:72px">Строительство Гипермаркета</span><span class="c" style="left:462px">Валерьев А.А.</span><span class="c r" style="right:888px">01.11.24</span><span class="c r" style="right:796px">07.10.25</span><span class="c r" style="right:683px">40 500 000</span><span class="c r" style="right:568px">31 328 200</span><span class="c r" style="right:476px">37</span><span class="c r" style="right:384px">54</span><div class="bar" style="left:1230.9px;width:117.4px;background:#6e7f90"></div></div>
<div class="a rw" style="top:60px"><svg style="left:48px;top:2px" width="17" height="16" viewBox="0 0 17 16"><path d="M8.6 0.6 L16.6 7.2 L15.6 8.2 L8.6 2.4 L1.6 8.2 L0.6 7.2 Z" fill="#7cc49a"/><path d="M8.6 2.2 L15 7.6 V15.5 H10.5 V11 H7 V15.5 H2.2 V7.6 Z" fill="#2f9e62"/><rect x="13" y="1.5" width="1.8" height="4" fill="#2f9e62"/></svg><span class="nm" style="left:72px">Строительство лаборатории для ООО "Спектр"</span><span class="c" style="left:462px">Васильев А.Н.</span><span class="c r" style="right:888px">02.01.25</span><span class="c r" style="right:796px">02.04.26</span><span class="c r" style="right:683px">20 250 000</span><span class="c r" style="right:568px">16 374 100</span><span class="c r" style="right:476px">52</span><span class="c r" style="right:384px">38</span><div class="bar" style="left:1252.3px;width:157.1px;background:#6e7f90"></div></div>
<div class="a rw" style="top:80px"><svg style="left:48px;top:2px" width="17" height="16" viewBox="0 0 17 16"><path d="M8.6 0.6 L16.6 7.2 L15.6 8.2 L8.6 2.4 L1.6 8.2 L0.6 7.2 Z" fill="#7cc49a"/><path d="M8.6 2.2 L15 7.6 V15.5 H10.5 V11 H7 V15.5 H2.2 V7.6 Z" fill="#2f9e62"/><rect x="13" y="1.5" width="1.8" height="4" fill="#2f9e62"/></svg><span class="nm" style="left:72px">Строительство Ресторана</span><span class="c" style="left:462px">Орлов М.В.</span><span class="c r" style="right:888px">02.01.25</span><span class="c r" style="right:796px">24.12.25</span><span class="c r" style="right:683px">40 500 000</span><span class="c r" style="right:568px">31 905 040</span><span class="c r" style="right:476px">52</span><span class="c r" style="right:384px">40</span><div class="bar" style="left:1252.3px;width:122.9px;background:#6e7f90"></div></div>
<div class="a rw" style="top:100px"><svg style="left:48px;top:2px" width="17" height="16" viewBox="0 0 17 16"><path d="M8.6 0.6 L16.6 7.2 L15.6 8.2 L8.6 2.4 L1.6 8.2 L0.6 7.2 Z" fill="#7cc49a"/><path d="M8.6 2.2 L15 7.6 V15.5 H10.5 V11 H7 V15.5 H2.2 V7.6 Z" fill="#2f9e62"/><rect x="13" y="1.5" width="1.8" height="4" fill="#2f9e62"/></svg><span class="nm" style="left:72px">Строительство складского комплекса для ТД "Западный"</span><span class="c" style="left:462px">Орлов М.В.</span><span class="c r" style="right:888px">07.08.25</span><span class="c r" style="right:796px">13.01.26</span><span class="c r" style="right:683px">15 000 000</span><span class="c r" style="right:568px">3 624 846</span><span class="c r" style="right:476px">0</span><span class="c r" style="right:384px">0</span><div class="bar" style="left:1327.3px;width:54.9px;background:#6e7f90"></div></div>
<div class="a rw g" style="top:120px"><svg style="left:0;top:0" width="1577" height="20"><rect width="1577" height="20" fill="url(#hatch)"/></svg><svg style="left:4px;top:4px" width="11" height="11" viewBox="0 0 11 11"><circle cx="5.6" cy="5.5" r="4.4" fill="none" stroke="#b4b4b4" stroke-width="1.2"/><path d="M3.4 5.5 H7.8" stroke="#999" stroke-width="1.8"/></svg><svg style="left:26px;top:3px" width="16" height="15" viewBox="0 0 16 15"><path d="M3.3 0 H11.8 V4.5 H10 V1.8 H5.1 V4.5 H3.3 Z" fill="#8c5a38"/><rect x="0" y="3.2" width="15.2" height="11" rx="0.6" fill="#8c5a38"/><rect x="1.2" y="5.2" width="12.8" height="2" fill="#f4ece4"/><path d="M1.5 9 H5 L7 9.8 H14 M1.5 11.5 H6 M8 12 H14" stroke="#b89070" stroke-width="0.8"/></svg><span class="nm" style="left:49px;font-weight:bold">Инвестиции</span><span class="c" style="left:462px"></span><span class="c r" style="right:888px">18.12.24</span><span class="c r" style="right:796px">14.12.29</span><span class="c r" style="right:683px">76 463 000</span><span class="c r" style="right:568px">72 080 456</span><span class="c r" style="right:476px">0</span><span class="c r" style="right:384px">0</span><div class="bar" style="left:1247.2px;width:629.0px;background:#58a0d2"></div></div>
<div class="a rw" style="top:140px"><svg style="left:47px;top:4px" width="18" height="14" viewBox="0 0 18 14"><path d="M1.8 12 L5.6 6.8 L10.3 10 L15 3.5" fill="none" stroke="#2e9a78" stroke-width="2.3" stroke-linejoin="round" stroke-linecap="round"/><path d="M11.5 2.8 L16.5 0.5 L16.6 5.8 Z" fill="#2e9a78"/></svg><span class="nm" style="left:72px">Инвестиционный проект</span><span class="c" style="left:462px">Макаров А.Ю.</span><span class="c r" style="right:888px">01.07.25</span><span class="c r" style="right:796px">14.12.29</span><span class="c r" style="right:683px">7 896 000</span><span class="c r" style="right:568px">6 870 880</span><span class="c r" style="right:476px">0</span><span class="c r" style="right:384px">0</span><div class="bar" style="left:1314.5px;width:561.6px;background:#6e7f90"></div></div>
<div class="a rw" style="top:160px"><svg style="left:47px;top:4px" width="18" height="14" viewBox="0 0 18 14"><path d="M1.8 12 L5.6 6.8 L10.3 10 L15 3.5" fill="none" stroke="#2e9a78" stroke-width="2.3" stroke-linejoin="round" stroke-linecap="round"/><path d="M11.5 2.8 L16.5 0.5 L16.6 5.8 Z" fill="#2e9a78"/></svg><span class="nm" style="left:72px">Инвестиционный проект развития ИЖС</span><span class="c" style="left:462px">Егоров Г.А.</span><span class="c r" style="right:888px">18.12.24</span><span class="c r" style="right:796px">09.01.29</span><span class="c r" style="right:683px">5 000 000</span><span class="c r" style="right:568px">10 529 576</span><span class="c r" style="right:476px">0</span><span class="c r" style="right:384px">0</span><div class="bar" style="left:1247.2px;width:511.9px;background:#6e7f90"></div></div>
<div class="a rw" style="top:180px"><svg style="left:47px;top:4px" width="18" height="14" viewBox="0 0 18 14"><path d="M1.8 12 L5.6 6.8 L10.3 10 L15 3.5" fill="none" stroke="#2e9a78" stroke-width="2.3" stroke-linejoin="round" stroke-linecap="round"/><path d="M11.5 2.8 L16.5 0.5 L16.6 5.8 Z" fill="#2e9a78"/></svg><span class="nm" style="left:72px">Проект развития инфраструктуры (инвестиции)</span><span class="c" style="left:462px">Кузьмин Г.А.</span><span class="c r" style="right:888px">16.01.26</span><span class="c r" style="right:796px">24.12.26</span><span class="c r" style="right:683px">26 567 000</span><span class="c r" style="right:568px">25 680 000</span><span class="c r" style="right:476px">0</span><span class="c r" style="right:384px">0</span><div class="bar" style="left:1383.2px;width:118.1px;background:#6e7f90"></div></div>
<div class="a rw" style="top:200px"><svg style="left:47px;top:4px" width="18" height="14" viewBox="0 0 18 14"><path d="M1.8 12 L5.6 6.8 L10.3 10 L15 3.5" fill="none" stroke="#2e9a78" stroke-width="2.3" stroke-linejoin="round" stroke-linecap="round"/><path d="M11.5 2.8 L16.5 0.5 L16.6 5.8 Z" fill="#2e9a78"/></svg><span class="nm" style="left:72px">Проект развития коттеджного массива (Рабочий сетевой графика)</span><span class="c" style="left:462px">Орлов М.В.</span><span class="c r" style="right:888px">10.11.25</span><span class="c r" style="right:796px">08.10.27</span><span class="c r" style="right:683px">37 000 000</span><span class="c r" style="right:568px">29 000 000</span><span class="c r" style="right:476px">0</span><span class="c r" style="right:384px">0</span><div class="bar" style="left:1360.0px;width:240.6px;background:#6e7f90"></div></div>
<div class="a rw g" style="top:220px"><svg style="left:0;top:0" width="1577" height="20"><rect width="1577" height="20" fill="url(#hatch)"/></svg><svg style="left:4px;top:4px" width="11" height="11" viewBox="0 0 11 11"><circle cx="5.6" cy="5.5" r="4.4" fill="none" stroke="#b4b4b4" stroke-width="1.2"/><path d="M3.4 5.5 H7.8" stroke="#999" stroke-width="1.8"/></svg><svg style="left:26px;top:3px" width="16" height="15" viewBox="0 0 16 15"><path d="M3.3 0 H11.8 V4.5 H10 V1.8 H5.1 V4.5 H3.3 Z" fill="#8c5a38"/><rect x="0" y="3.2" width="15.2" height="11" rx="0.6" fill="#8c5a38"/><rect x="1.2" y="5.2" width="12.8" height="2" fill="#f4ece4"/><path d="M1.5 9 H5 L7 9.8 H14 M1.5 11.5 H6 M8 12 H14" stroke="#b89070" stroke-width="0.8"/></svg><span class="nm" style="left:49px;font-weight:bold">Инжиниринг</span><span class="c" style="left:462px"></span><span class="c r" style="right:888px">03.10.24</span><span class="c r" style="right:796px">01.10.26</span><span class="c r" style="right:683px">106 224 280</span><span class="c r" style="right:568px">85 919 462</span><span class="c r" style="right:476px">4</span><span class="c r" style="right:384px">5</span><div class="bar" style="left:1220.9px;width:251.3px;background:#58a0d2"></div></div>
<div class="a rw" style="top:240px"><svg style="left:47px;top:4px" width="18" height="16" viewBox="0 0 18 16"><path d="M8.5 0.3 H7 Q0.8 1 0.8 8 Q0.8 15 7 15.6 H8.5 Z" fill="#48c0d4"/><path d="M2 4.5 H8.5 M1.2 8 H8.5 M2 11.5 H8.5 M5 0.8 V15.2" stroke="#a8e4ee" stroke-width="0.8"/><path d="M9.6 0.2 Q14.6 0 14.6 3.4 Q17.2 3.6 16.8 6.2 Q15.6 8 16.8 9.8 Q17.2 12.4 14.6 12.6 Q14.6 16 9.6 15.8 Q11.8 13.4 11.4 11.2 Q13 8 11.4 4.8 Q11.8 2.6 9.6 0.2 Z" fill="#30cc8c"/></svg><span class="nm" style="left:72px">Инжиниринг для АО "Альфа"</span><span class="c" style="left:462px">Егоров Г.А.</span><span class="c r" style="right:888px">14.01.25</span><span class="c r" style="right:796px">08.10.25</span><span class="c r" style="right:683px">85 346 000</span><span class="c r" style="right:568px">71 569 000</span><span class="c r" style="right:476px">0</span><span class="c r" style="right:384px">0</span><div class="bar" style="left:1256.5px;width:92.2px;background:#6e7f90"></div></div>
<div class="a rw" style="top:260px"><svg style="left:47px;top:4px" width="18" height="16" viewBox="0 0 18 16"><path d="M8.5 0.3 H7 Q0.8 1 0.8 8 Q0.8 15 7 15.6 H8.5 Z" fill="#48c0d4"/><path d="M2 4.5 H8.5 M1.2 8 H8.5 M2 11.5 H8.5 M5 0.8 V15.2" stroke="#a8e4ee" stroke-width="0.8"/><path d="M9.6 0.2 Q14.6 0 14.6 3.4 Q17.2 3.6 16.8 6.2 Q15.6 8 16.8 9.8 Q17.2 12.4 14.6 12.6 Q14.6 16 9.6 15.8 Q11.8 13.4 11.4 11.2 Q13 8 11.4 4.8 Q11.8 2.6 9.6 0.2 Z" fill="#30cc8c"/></svg><span class="nm" style="left:72px">Инжиниринг 2</span><span class="c" style="left:462px"></span><span class="c r" style="right:888px"></span><span class="c r" style="right:796px"></span><span class="c r" style="right:683px"></span><span class="c r" style="right:568px"></span><span class="c r" style="right:476px"></span><span class="c r" style="right:384px"></span></div>
</div>
</div>
<svg style="left:1585px;top:326px" width="9" height="7" viewBox="0 0 9 7"><path d="M1 6 L4.5 1 L8 6 Z" fill="#c8c8c8"/></svg>
<div class="a" style="left:1585px;top:339px;width:9px;height:290px;background:#d8d8d8;border-radius:4px"></div>
<div class="a" style="left:1585px;top:341px;width:9px;height:191px;background:#9a9a9a;border-radius:4px"></div>
</body></html>
